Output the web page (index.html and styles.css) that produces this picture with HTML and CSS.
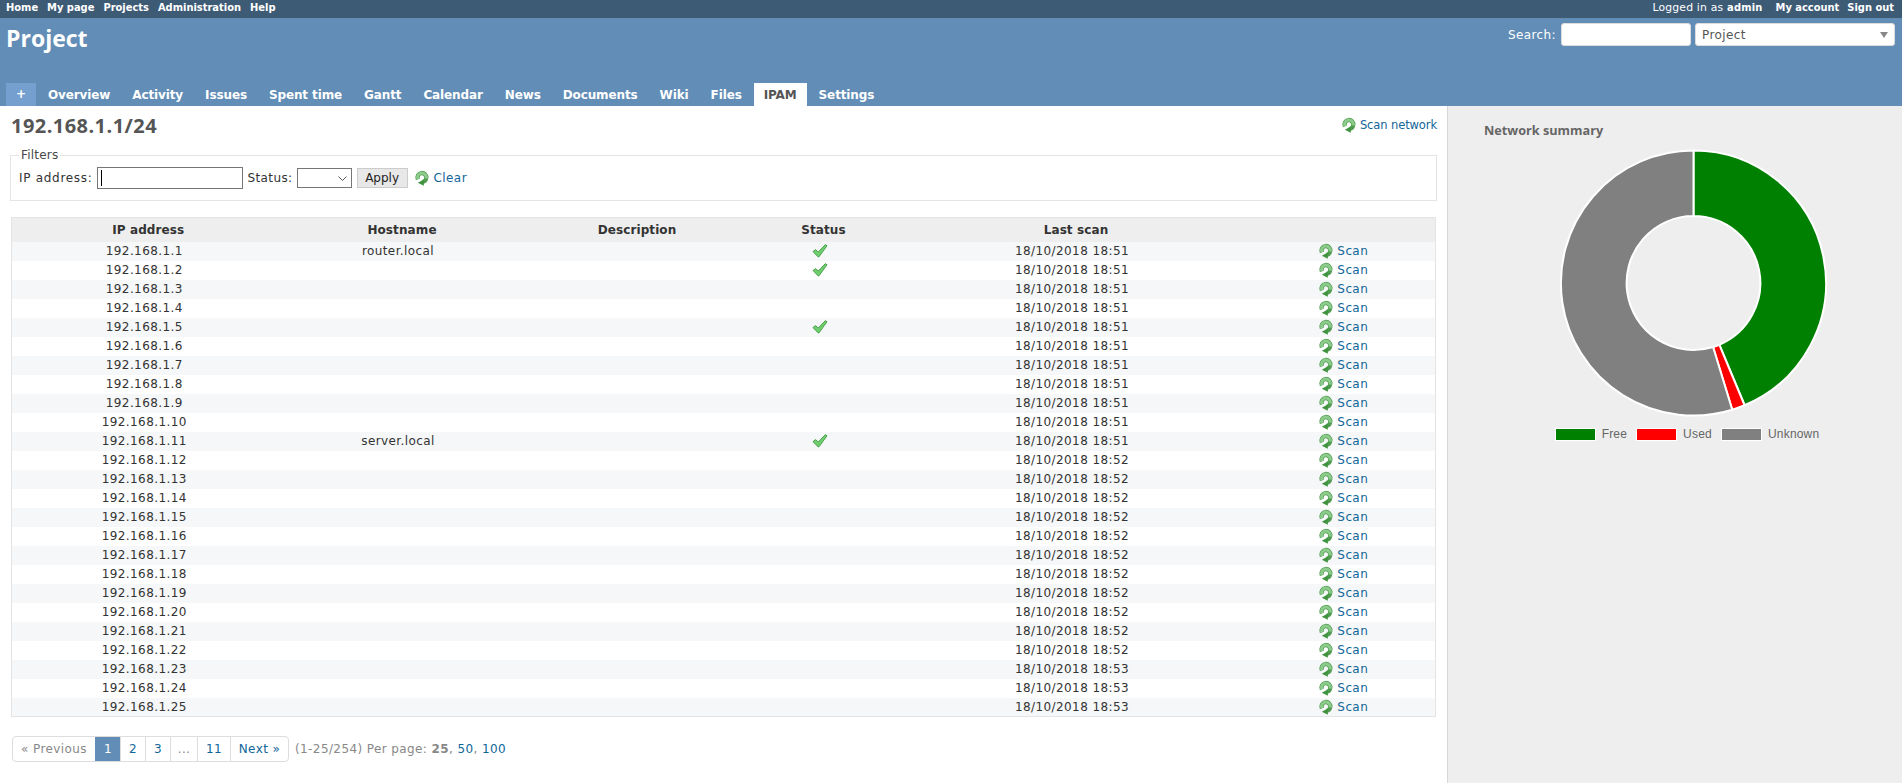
FILE: index.html
```html
<!DOCTYPE html>
<html lang="en">
<head>
<meta charset="utf-8">
<title>192.168.1.1/24 - Project</title>
<link rel="stylesheet" href="styles.css">
</head>
<body>
<svg class="defs" width="0" height="0" aria-hidden="true">
  <symbol id="reload" viewBox="0 0 16 16">
    <path d="M3.9 9.3A4.4 4.4 0 1 1 12.2 8.4" fill="none" stroke="#4f9c4f" stroke-width="4.4"/>
    <path d="M3.9 9.3A4.4 4.4 0 1 1 12.2 8.4" fill="none" stroke="#8ccb8c" stroke-width="3"/>
    <path d="M12.2 8.4A4.4 4.4 0 0 1 8.6 12" fill="none" stroke="#4f9c4f" stroke-width="4"/>
    <path d="M9.8 9.6L9.8 15.8L3.8 12.8Z" fill="#3f933f"/>
  </symbol>
  <symbol id="check" viewBox="0 0 16 16">
    <path d="M1 8.6L3.6 6.6L6.2 9L13.4 1.6L15 2.8L7 13.8L6 13.8Z" fill="#6fce6f" stroke="#3f9a3f" stroke-width=".9" stroke-linejoin="round"/>
  </symbol>
</svg>
<div class="topbar">
  <nav class="topnav">
    <a href="#">Home</a><a href="#">My page</a><a href="#">Projects</a><a href="#">Administration</a><a href="#">Help</a>
  </nav>
  <div class="account">
    <span class="loggedas">Logged in as <b>admin</b></span><a href="#">My account</a><a href="#">Sign out</a>
  </div>
</div>
<header class="header">
  <div class="header-top">
    <h1>Project</h1>
    <form class="quick">
      <label>Search:</label>
      <input class="q" type="text">
      <div class="jump">Project<span class="jump-arrow"></span></div>
    </form>
  </div>
  <nav class="tabs">
    <a class="tab-new" href="#">+</a>
    <a href="#">Overview</a><a href="#">Activity</a><a href="#">Issues</a><a href="#">Spent time</a><a href="#">Gantt</a><a href="#">Calendar</a><a href="#">News</a><a href="#">Documents</a><a href="#">Wiki</a><a href="#">Files</a><a class="selected" href="#">IPAM</a><a href="#">Settings</a>
  </nav>
</header>
<div class="main">
  <main class="content">
    <div class="title-row">
      <h2>192.168.1.1/24</h2>
      <a class="icon-link" href="#"><svg class="ico"><use href="#reload"/></svg>Scan network</a>
    </div>
    <fieldset class="filters">
      <legend>Filters</legend>
      <label class="ip-label">IP address:</label>
      <span class="ip-wrap"><input class="ip" type="text"><span class="caret"></span></span>
      <label class="status-label">Status:</label>
      <span class="status-wrap">
        <select class="status"><option></option></select>
        <svg class="chev" width="9" height="5" viewBox="0 0 9 5"><path d="M.5.5L4.5 4.5L8.5.5" fill="none" stroke="#555"/></svg>
      </span>
      <button class="apply" type="button">Apply</button>
      <a class="icon-link clear" href="#"><svg class="ico"><use href="#reload"/></svg>Clear</a>
    </fieldset>
    <table class="list">
      <colgroup><col class="c1"><col class="c2"><col class="c3"><col class="c4"><col class="c5"><col class="c6"></colgroup>
      <thead><tr><th>IP address</th><th>Hostname</th><th>Description</th><th>Status</th><th>Last scan</th><th></th></tr></thead>
      <tbody>
        <tr><td>192.168.1.1</td><td>router.local</td><td></td><td><svg class="ico"><use href="#check"/></svg></td><td>18/10/2018 18:51</td><td><a class="icon-link" href="#"><svg class="ico"><use href="#reload"/></svg>Scan</a></td></tr>
        <tr><td>192.168.1.2</td><td></td><td></td><td><svg class="ico"><use href="#check"/></svg></td><td>18/10/2018 18:51</td><td><a class="icon-link" href="#"><svg class="ico"><use href="#reload"/></svg>Scan</a></td></tr>
        <tr><td>192.168.1.3</td><td></td><td></td><td></td><td>18/10/2018 18:51</td><td><a class="icon-link" href="#"><svg class="ico"><use href="#reload"/></svg>Scan</a></td></tr>
        <tr><td>192.168.1.4</td><td></td><td></td><td></td><td>18/10/2018 18:51</td><td><a class="icon-link" href="#"><svg class="ico"><use href="#reload"/></svg>Scan</a></td></tr>
        <tr><td>192.168.1.5</td><td></td><td></td><td><svg class="ico"><use href="#check"/></svg></td><td>18/10/2018 18:51</td><td><a class="icon-link" href="#"><svg class="ico"><use href="#reload"/></svg>Scan</a></td></tr>
        <tr><td>192.168.1.6</td><td></td><td></td><td></td><td>18/10/2018 18:51</td><td><a class="icon-link" href="#"><svg class="ico"><use href="#reload"/></svg>Scan</a></td></tr>
        <tr><td>192.168.1.7</td><td></td><td></td><td></td><td>18/10/2018 18:51</td><td><a class="icon-link" href="#"><svg class="ico"><use href="#reload"/></svg>Scan</a></td></tr>
        <tr><td>192.168.1.8</td><td></td><td></td><td></td><td>18/10/2018 18:51</td><td><a class="icon-link" href="#"><svg class="ico"><use href="#reload"/></svg>Scan</a></td></tr>
        <tr><td>192.168.1.9</td><td></td><td></td><td></td><td>18/10/2018 18:51</td><td><a class="icon-link" href="#"><svg class="ico"><use href="#reload"/></svg>Scan</a></td></tr>
        <tr><td>192.168.1.10</td><td></td><td></td><td></td><td>18/10/2018 18:51</td><td><a class="icon-link" href="#"><svg class="ico"><use href="#reload"/></svg>Scan</a></td></tr>
        <tr><td>192.168.1.11</td><td>server.local</td><td></td><td><svg class="ico"><use href="#check"/></svg></td><td>18/10/2018 18:51</td><td><a class="icon-link" href="#"><svg class="ico"><use href="#reload"/></svg>Scan</a></td></tr>
        <tr><td>192.168.1.12</td><td></td><td></td><td></td><td>18/10/2018 18:52</td><td><a class="icon-link" href="#"><svg class="ico"><use href="#reload"/></svg>Scan</a></td></tr>
        <tr><td>192.168.1.13</td><td></td><td></td><td></td><td>18/10/2018 18:52</td><td><a class="icon-link" href="#"><svg class="ico"><use href="#reload"/></svg>Scan</a></td></tr>
        <tr><td>192.168.1.14</td><td></td><td></td><td></td><td>18/10/2018 18:52</td><td><a class="icon-link" href="#"><svg class="ico"><use href="#reload"/></svg>Scan</a></td></tr>
        <tr><td>192.168.1.15</td><td></td><td></td><td></td><td>18/10/2018 18:52</td><td><a class="icon-link" href="#"><svg class="ico"><use href="#reload"/></svg>Scan</a></td></tr>
        <tr><td>192.168.1.16</td><td></td><td></td><td></td><td>18/10/2018 18:52</td><td><a class="icon-link" href="#"><svg class="ico"><use href="#reload"/></svg>Scan</a></td></tr>
        <tr><td>192.168.1.17</td><td></td><td></td><td></td><td>18/10/2018 18:52</td><td><a class="icon-link" href="#"><svg class="ico"><use href="#reload"/></svg>Scan</a></td></tr>
        <tr><td>192.168.1.18</td><td></td><td></td><td></td><td>18/10/2018 18:52</td><td><a class="icon-link" href="#"><svg class="ico"><use href="#reload"/></svg>Scan</a></td></tr>
        <tr><td>192.168.1.19</td><td></td><td></td><td></td><td>18/10/2018 18:52</td><td><a class="icon-link" href="#"><svg class="ico"><use href="#reload"/></svg>Scan</a></td></tr>
        <tr><td>192.168.1.20</td><td></td><td></td><td></td><td>18/10/2018 18:52</td><td><a class="icon-link" href="#"><svg class="ico"><use href="#reload"/></svg>Scan</a></td></tr>
        <tr><td>192.168.1.21</td><td></td><td></td><td></td><td>18/10/2018 18:52</td><td><a class="icon-link" href="#"><svg class="ico"><use href="#reload"/></svg>Scan</a></td></tr>
        <tr><td>192.168.1.22</td><td></td><td></td><td></td><td>18/10/2018 18:52</td><td><a class="icon-link" href="#"><svg class="ico"><use href="#reload"/></svg>Scan</a></td></tr>
        <tr><td>192.168.1.23</td><td></td><td></td><td></td><td>18/10/2018 18:53</td><td><a class="icon-link" href="#"><svg class="ico"><use href="#reload"/></svg>Scan</a></td></tr>
        <tr><td>192.168.1.24</td><td></td><td></td><td></td><td>18/10/2018 18:53</td><td><a class="icon-link" href="#"><svg class="ico"><use href="#reload"/></svg>Scan</a></td></tr>
        <tr><td>192.168.1.25</td><td></td><td></td><td></td><td>18/10/2018 18:53</td><td><a class="icon-link" href="#"><svg class="ico"><use href="#reload"/></svg>Scan</a></td></tr>
      </tbody>
    </table>
    <div class="pagination">
      <ul class="pages">
        <li class="off p-prev">« Previous</li><li class="current p-n">1</li><li class="p-n"><a href="#">2</a></li><li class="p-n"><a href="#">3</a></li><li class="off p-gap">...</li><li class="p-11"><a href="#">11</a></li><li class="p-next"><a href="#">Next »</a></li>
      </ul>
      <span class="items">(1-25/254) Per page: <b>25</b>, <a href="#">50</a>, <a href="#">100</a></span>
    </div>
  </main>
  <aside class="sidebar">
    <h3>Network summary</h3>
    <svg class="donut" width="270" height="270" viewBox="0 0.5 269 269" role="img" aria-label="Network summary chart">
      <g stroke="#fff" stroke-width="2" stroke-linejoin="bevel">
        <path fill="#008000" d="M135 3A132 132 0 0 1 185.9 256.8L160.7 196.5A66.7 66.7 0 0 0 135 68.3Z"/>
        <path fill="#ff0000" d="M185.9 256.8A132 132 0 0 1 173.6 261.2L154.5 198.8A66.7 66.7 0 0 0 160.7 196.5Z"/>
        <path fill="#808080" d="M173.6 261.2A132 132 0 1 1 135 3L135 68.3A66.7 66.7 0 1 0 154.5 198.8Z"/>
      </g>
    </svg>
    <div class="legend">
      <span class="key"><i class="swatch free"></i>Free</span>
      <span class="key"><i class="swatch used"></i>Used</span>
      <span class="key"><i class="swatch unknown"></i>Unknown</span>
    </div>
  </aside>
</div>
</body>
</html>
```
FILE: styles.css
```css
* { box-sizing: border-box; }
html, body { margin: 0; height: 100%; overflow: hidden; }
body {
  display: flex;
  flex-direction: column;
  font-family: "DejaVu Sans", Verdana, sans-serif;
  font-size: 12px;
  letter-spacing: .4px;
  color: #333;
  background: #fff;
}
a { color: #169; text-decoration: none; }
.defs { position: absolute; }
.ico { width: 16px; height: 16px; flex: none; }

.topbar {
  display: flex;
  justify-content: space-between;
  height: 18px;
  padding: 0 8px 0 6px;
  background: #3e5b76;
  color: #fff;
  font-size: 10.8px;
  line-height: 16px;
  letter-spacing: 0;
}
.topbar a, .loggedas b {
  color: #fff;
  font-family: "DejaVu Sans Condensed", "DejaVu Sans", sans-serif;
  font-size: 11px;
  font-weight: bold;
}
.topnav { display: flex; gap: 9px; }
.account { display: flex; gap: 8px; }
.loggedas { margin-right: 5px; letter-spacing: .2px; }

.header { height: 88px; padding: 0 7px 0 6px; background: #628db6; color: #fff; display: flex; flex-direction: column; }
.header-top { display: flex; justify-content: space-between; height: 65px; }
h1 {
  margin: 4px 0 0;
  font-family: "Open Sans", sans-serif;
  font-size: 23px;
  line-height: 33px;
  font-weight: 700;
  letter-spacing: 0;
}
.quick { display: flex; align-items: center; height: 23px; margin-top: 5px; }
.quick label { margin-right: 5px; }
.q { width: 130px; height: 23px; margin-right: 4px; border: 1px solid #ddd; border-radius: 3px; background: #fff; }
.jump {
  position: relative;
  width: 200px;
  height: 23px;
  padding-left: 6px;
  line-height: 22px;
  border: 1px solid #ddd;
  border-radius: 3px;
  background: #fff;
  color: #555;
}
.jump-arrow {
  position: absolute;
  right: 6px;
  top: 8px;
  border-style: solid;
  border-width: 6px 4.5px 0;
  border-color: #888 transparent transparent;
}
.tabs { display: flex; gap: 2px; height: 23px; }
.tabs a { padding: 1px 10px 0; color: #fff; font-weight: bold; line-height: 22px; letter-spacing: -.12px; }
.tabs .tab-new { width: 30px; padding: 0; line-height: 23px; text-align: center; background: #759fcf; }
.tabs .selected { background: #fff; color: #555; }

.main { flex: 1; display: flex; min-height: 0; }
.content { width: 1447px; flex: none; padding: 0 10px 0 10px; }
.title-row { display: flex; justify-content: space-between; height: 43px; }
h2 {
  margin: 7px 0 0 1px;
  font-family: "Open Sans", sans-serif;
  font-size: 20px;
  line-height: 25px;
  font-weight: 700;
  color: #555;
  letter-spacing: .45px;
}
.icon-link { display: inline-flex; align-items: center; gap: 3px; }
.title-row .icon-link { height: 16px; margin-top: 11px; font-size: 11.5px; letter-spacing: -.1px; }

.filters {
  display: flex;
  align-items: center;
  height: 52px;
  margin: 0 0 16px;
  min-width: 0;
  padding: 0 0 6px 8px;
  border: 1px solid #e4e4e4;
}
.filters legend { padding: 0 2px; line-height: 12px; color: #484848; letter-spacing: .2px; }
.ip-label { letter-spacing: .7px; }
.ip-wrap { position: relative; display: block; height: 22px; margin: 0 4px 0 5px; }
.ip { display: block; width: 146px; height: 22px; border: 1px solid #767676; background: #fff; }
.caret { position: absolute; left: 4px; top: 3px; width: 1px; height: 16px; background: #000; }
.status-wrap { position: relative; display: block; height: 20px; margin: 0 5px 0 4px; }
.status {
  display: block;
  width: 55px;
  height: 20px;
  border: 1px solid #767676;
  border-radius: 0;
  background: #fff;
  appearance: none;
}
.chev { position: absolute; right: 5px; top: 8px; }
.apply {
  width: 51px;
  height: 20px;
  padding: 0;
  font: inherit;
  color: #222;
  border: 1px solid #ccc;
  background: #e8e8e8;
}
.clear { margin-left: 6px; gap: 4px; }

.list { width: 1424px; border-collapse: collapse; table-layout: fixed; border: 1px solid #e4e4e4; margin-left: 1px; }
.c1 { width: 265px; } .c2 { width: 243px; } .c3 { width: 227px; } .c4 { width: 146px; } .c5 { width: 359px; } .c6 { width: 184px; }
.list th { height: 24px; padding: 0 0 0 8px; background: #eee; color: #333; font-weight: bold; text-align: center; letter-spacing: .1px; }
.list td { height: 19px; padding: 0; text-align: center; line-height: 16px; }
.list .ico { display: block; margin: 0 auto; }
.list .icon-link { justify-content: center; vertical-align: middle; gap: 3px; }
.list tbody tr:nth-child(odd) { background: #f6f7f8; }

.pagination { display: flex; align-items: center; margin: 19px 0 0 2px; color: #888; }
.pages { display: flex; height: 26px; margin: 0 6px 0 0; padding: 0; list-style: none; border: 1px solid #ddd; border-radius: 4px; line-height: 24px; text-align: center; overflow: hidden; }
.pages li { border-left: 1px solid #ddd; }
.pages li:first-child { border-left: 0; }
.p-prev { width: 82px; }
.p-n { width: 25px; }
.p-gap { width: 27px; }
.p-11 { width: 33px; }
.p-next { width: 58px; }
.pages .current { background: #628db6; color: #fff; border-left-color: #628db6; }
.items b { font-weight: bold; }

.sidebar { flex: 1; padding: 0 0 0 36px; background: #eee; border-left: 1px solid #d7d7d7; }
h3 {
  margin: 14px 0 8px;
  font-family: "Open Sans", sans-serif;
  font-size: 12.7px;
  line-height: 20px;
  font-weight: 700;
  color: #666;
  letter-spacing: 0;
}
.donut { display: block; margin: 0 auto; }
.legend {
  display: flex;
  justify-content: center;
  margin: 10px 12px 0 0;
  gap: 9px;
  font-family: "Liberation Sans", Arial, sans-serif;
  font-size: 12px;
  line-height: 13px;
  color: #666;
  letter-spacing: .2px;
}
.key { display: flex; align-items: center; gap: 6px; }
.swatch { width: 41px; height: 13px; flex: none; border: 1px solid #fff; }
.free { background: #008000; }
.used { background: #ff0000; }
.unknown { background: #808080; }
```
